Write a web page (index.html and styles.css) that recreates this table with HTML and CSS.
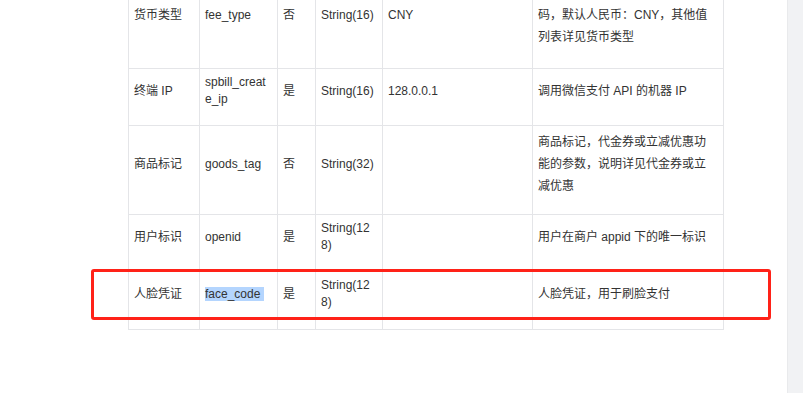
FILE: index.html
```html
<!DOCTYPE html>
<html lang="zh-CN">
<head>
<meta charset="utf-8">
<title>参数表</title>
<link rel="stylesheet" href="styles.css">
</head>
<body>
<div class="screen">
  <main class="doc">
    <table class="params">
      <colgroup>
        <col class="c-name"><col class="c-field"><col class="c-req"><col class="c-type"><col class="c-sample"><col class="c-desc">
      </colgroup>
      <tbody>
        <tr class="row-first">
          <td>货币类型</td>
          <td>fee_type</td>
          <td>否</td>
          <td>String(16)</td>
          <td>CNY</td>
          <td class="desc">符合ISO 4217标准的三位字母代码，默认人民币：CNY，其他值列表详见货币类型</td>
        </tr>
        <tr>
          <td>终端 IP</td>
          <td>spbill_create_ip</td>
          <td>是</td>
          <td>String(16)</td>
          <td>128.0.0.1</td>
          <td class="desc">调用微信支付 API 的机器 IP</td>
        </tr>
        <tr>
          <td>商品标记</td>
          <td>goods_tag</td>
          <td>否</td>
          <td>String(32)</td>
          <td></td>
          <td class="desc">商品标记，代金券或立减优惠功能的参数，说明详见代金券或立减优惠</td>
        </tr>
        <tr>
          <td>用户标识</td>
          <td>openid</td>
          <td>是</td>
          <td>String(128)</td>
          <td></td>
          <td class="desc">用户在商户 appid 下的唯一标识</td>
        </tr>
        <tr class="row-last">
          <td>人脸凭证</td>
          <td><span class="selected">face_code&nbsp;</span></td>
          <td>是</td>
          <td>String(128)</td>
          <td></td>
          <td class="desc">人脸凭证，用于刷脸支付</td>
        </tr>
      </tbody>
    </table>
    <div class="callout"></div>
  </main>
  <div class="scrollbar"></div>
</div>
</body>
</html>
```
FILE: styles.css
```css
html, body {
  margin: 0;
  padding: 0;
  background: #ffffff;
}

.screen {
  display: flex;
  width: 803px;
  height: 393px;
  overflow: hidden;
}

.doc {
  position: relative;
  flex: 1;
  overflow: hidden;
  background: #ffffff;
}

.params {
  margin: -24px 0 0 128px;
  width: 596px;
  table-layout: fixed;
  border-collapse: collapse;
  font-family: "Liberation Sans", "Noto Sans CJK SC", sans-serif;
  font-size: 12px;
  line-height: 17px;
  color: #333333;
}

.c-name { width: 71px; }
.c-field { width: 78px; }
.c-req { width: 38px; }
.c-type { width: 67px; }
.c-sample { width: 150px; }
.c-desc { width: 191px; }

.params td {
  border: 1px solid #e4e5e8;
  padding: 5px 5px 17px 5px;
  vertical-align: middle;
  word-break: break-all;
}

.params td.desc {
  line-height: 22px;
  padding-right: 10px;
}

.params .row-first td {
  padding-bottom: 20px;
}

.params .row-last td {
  padding-bottom: 18px;
}

.selected {
  background: #b4d5fe;
}

.callout {
  position: absolute;
  left: 91px;
  top: 269px;
  width: 674px;
  height: 45px;
  border: 3px solid #ff2218;
  border-radius: 3px;
}

.scrollbar {
  width: 15px;
  flex: none;
  background: #f1f2f4;
  border-left: 1px solid #e9eaec;
}
```
